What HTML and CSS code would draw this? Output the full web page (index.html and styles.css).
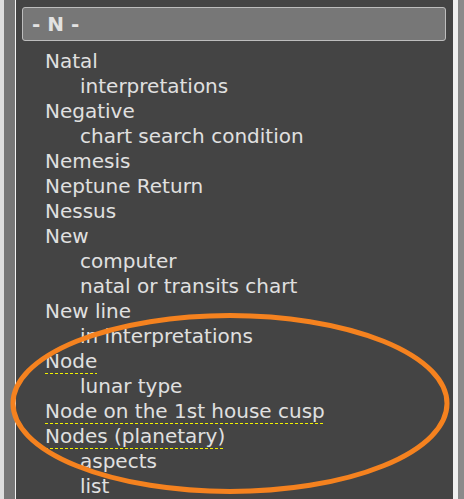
FILE: index.html
```html
<!DOCTYPE html>
<html>
<head>
<meta charset="utf-8">
<link rel="stylesheet" href="styles.css">
</head>
<body>
<div class="frame">
  <div class="edge"></div>
  <div class="rail"></div>
  <div class="panel">
    <div class="letter">- N -</div>
    <ul class="index">
      <li class="term">Natal</li>
      <li class="sub">interpretations</li>
      <li class="term">Negative</li>
      <li class="sub">chart search condition</li>
      <li class="term">Nemesis</li>
      <li class="term">Neptune Return</li>
      <li class="term">Nessus</li>
      <li class="term">New</li>
      <li class="sub">computer</li>
      <li class="sub">natal or transits chart</li>
      <li class="term">New line</li>
      <li class="sub">in interpretations</li>
      <li class="term"><span class="link">Node</span></li>
      <li class="sub">lunar type</li>
      <li class="term"><span class="link">Node on the 1st house cusp</span></li>
      <li class="term"><span class="link">Nodes (planetary)</span></li>
      <li class="sub">aspects</li>
      <li class="sub">list</li>
    </ul>
  </div>
  <div class="gap"></div>
  <div class="scroll"></div>
</div>
<svg class="circle" width="464" height="499" viewBox="0 0 464 499">
  <ellipse cx="230" cy="403.5" rx="217" ry="88" fill="none" stroke="#f5821f" stroke-width="5"/>
</svg>
</body>
</html>
```
FILE: styles.css
```css
html, body {
  margin: 0;
  padding: 0;
}
body {
  width: 464px;
  height: 499px;
  overflow: hidden;
  position: relative;
  font-family: "DejaVu Sans", sans-serif;
  background: #444;
}
.frame {
  display: flex;
  height: 499px;
}
.edge {
  width: 4px;
  background: #dedede;
}
.rail {
  width: 11px;
  background: #777;
  border-right: 1px solid #f2f2f2;
}
.panel {
  flex: 1;
  background: #444;
  padding: 7px 7px 0 6px;
  min-width: 0;
}
.gap {
  width: 5px;
  background: #f0f0f0;
}
.scroll {
  width: 6px;
  background: #8a8a8a;
}
.letter {
  height: 32px;
  box-sizing: content-box;
  background: #777;
  border: 1px solid #bdbdbd;
  border-radius: 3px;
  color: #e2e2e2;
  font-weight: bold;
  font-size: 20px;
  line-height: 32px;
  padding-left: 9px;
  white-space: pre;
}
.index {
  list-style: none;
  margin: 8px 0 0 0;
  padding: 0 0 0 23px;
  color: #e0e0e0;
  font-size: 20px;
  line-height: 25px;
  white-space: nowrap;
}
.sub {
  padding-left: 35px;
}
.link {
  padding-bottom: 1px;
  background-image: linear-gradient(to right, #f0f000 0 3px, transparent 3px 5px);
  background-size: 5px 1px;
  background-position: left bottom;
  background-repeat: repeat-x;
}
.circle {
  position: absolute;
  left: 0;
  top: 0;
  pointer-events: none;
}
```
